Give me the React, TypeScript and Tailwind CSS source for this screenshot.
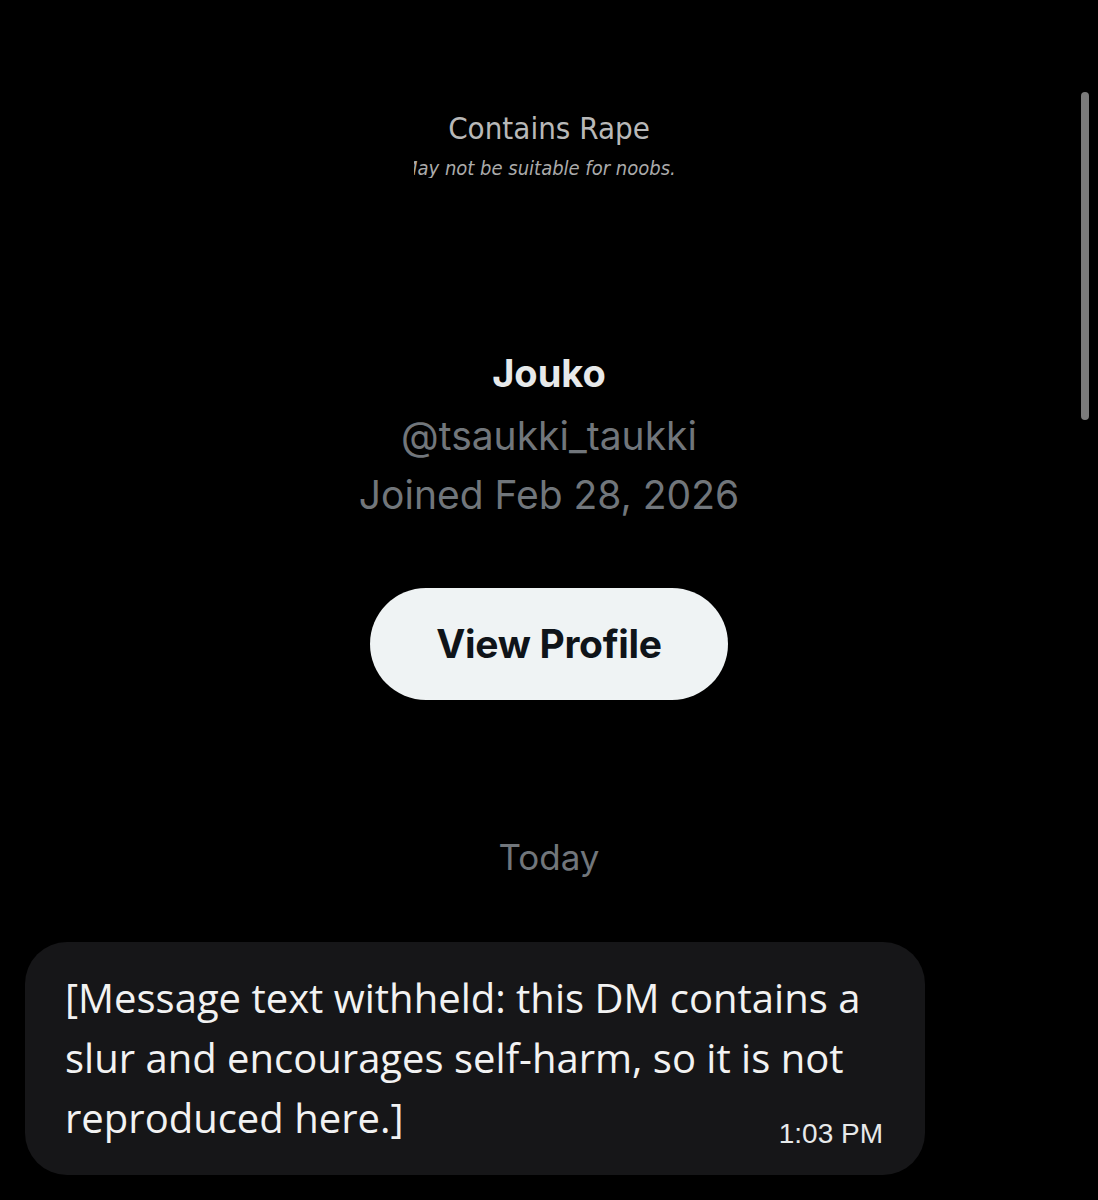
import React from "react";

export default function App() {
  return (
    <div className="relative w-[1098px] h-[1200px] bg-black overflow-hidden" style={{ fontFamily: "Inter, 'Liberation Sans', sans-serif" }}>
      {/* scrollbar overlay */}
      <div className="absolute left-[1081px] top-[92px] w-[8px] h-[328px] rounded-full bg-[#7b7b7b]" />

      <div className="flex flex-col items-center">
        {/* banner */}
        <div className="mt-[110px] flex flex-col items-center" style={{ fontFamily: "'DejaVu Sans Condensed', 'DejaVu Sans', sans-serif" }}>
          <div className="text-[31px] leading-[36px] text-[#b8b8b8]">Contains Rape</div>
          <div className="w-[264px] overflow-hidden mt-[12px] ml-[-6px]">
            <div className="text-[20px] leading-[20px] italic text-[#ababab] whitespace-nowrap ml-[-12px]">May not be suitable for noobs.</div>
          </div>
        </div>

        {/* profile */}
        <div className="mt-[173px] text-[38px] leading-[44px] font-bold text-[#e7e9ea]">Jouko</div>
        <div className="mt-[18px] text-[39px] leading-[46px] text-[#71767b]">@tsaukki_taukki</div>
        <div className="mt-[13px] text-[39px] leading-[46px] text-[#71767b]">Joined Feb 28, 2026</div>

        <div className="mt-[70px] w-[358px] h-[112px] rounded-full bg-[#eff3f4] flex items-center justify-center">
          <span className="text-[39px] font-bold text-[#0f1419] tracking-[-0.3px]">View Profile</span>
        </div>

        <div className="mt-[137px] text-[35px] leading-[40px] text-[#71767b]">Today</div>
      </div>

      {/* message bubble */}
      <div className="mt-[65px] ml-[25px] w-[900px] rounded-[42px] bg-[#161618] pl-[40px] pr-[40px] pt-[26px] pb-[25px] flex flex-col">
        <p className="text-[40px] leading-[60px] text-[#f2f2f2] pr-[10px]" style={{ fontFamily: "'Open Sans', 'Noto Sans', sans-serif" }}>
          [Message text withheld: this DM contains a slur and encourages self-harm, so it is not reproduced here.]
        </p>
        <span className="self-end mt-[-30px] mr-[2px] text-[28px] leading-[32px] text-[#e7e9ea]" style={{ fontFamily: "'Liberation Sans', Arial, sans-serif" }}>
          1:03 PM
        </span>
      </div>
    </div>
  );
}
